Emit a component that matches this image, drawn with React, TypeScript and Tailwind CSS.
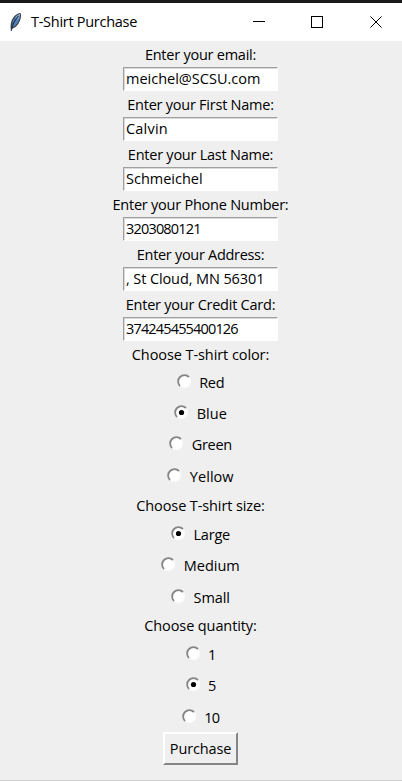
import React from "react";

function Feather() {
  return (
    <svg width="14" height="20" viewBox="0 0 14 20" className="ml-[9px] shrink-0">
      <path d="M2 18.6 C1 14 1.6 9 4.4 5.2 C6.4 2.6 9 1.2 11.6 1 C12.6 3.6 11.8 8 9.6 11.6 C8 14.2 6 16 3.6 16.4 Z" fill="#3f4248" />
      <path d="M3.4 14.6 C3 10.6 4.2 7.2 6.4 4.8 C8 3 9.6 2.2 11 2 C11.4 5 10.4 8.4 8.4 11.2 C7 13.2 5.4 14.6 3.4 14.6 Z" fill="#4f83bd" />
      <path d="M6.6 5.4 C8 3.4 9.4 2.4 10.8 2.2 C10.8 4 10 5.8 8.6 7.4 Z" fill="#9dbbdc" />
      <path d="M2.2 18.8 C3 13.6 5.4 8.4 9.6 3.8" fill="none" stroke="#22344d" strokeWidth="1.1" />
    </svg>
  );
}

function TitleBar() {
  return (
    <header className="flex h-[41px] items-center border-t-[3px] border-[#1c1a1c] bg-white">
      <Feather />
      <h1 className="ml-2 w-[200px] whitespace-nowrap text-[14.5px] font-normal tracking-[-0.28px] text-black">T-Shirt Purchase</h1>
      <svg width="130" height="14" viewBox="0 0 130 14" className="ml-auto mr-[19px] shrink-0" fill="none" stroke="#000">
        <path d="M0 6.5H12" />
        <rect x="58.5" y="1.5" width="11" height="11" />
        <path d="M117.5 1.5L128.5 12.5M128.5 1.5L117.5 12.5" />
      </svg>
    </header>
  );
}

function Label({ text, tracking = "tracking-[-0.24px]", height = "h-[25px]" }: { text: string; tracking?: string; height?: string }) {
  return <div className={`flex ${height} items-center justify-center whitespace-nowrap ${tracking}`}>{text}</div>;
}

function Entry({ text, tracking = "tracking-normal" }: { text: string; tracking?: string }) {
  return (
    <div className="mb-px flex h-6 w-[155px] items-center whitespace-nowrap border border-[#a0a0a0] border-b-white border-r-white bg-white pl-[2px] shadow-[inset_1px_1px_0_#d9d9d9]">
      <span className={tracking}>{text}</span>
    </div>
  );
}

function Radio({ text, checked = false, tracking = "tracking-[-0.3px]" }: { text: string; checked?: boolean; tracking?: string }) {
  return (
    <div className="flex h-[31.33px] items-center justify-center">
      <svg width="15" height="15" viewBox="0 0 15 15" className="-mt-[3px] mr-[7.5px] shrink-0" fill="none">
        <circle cx="7.5" cy="7.5" r="6" fill="#fff" stroke="#fafafa" strokeWidth="1.4" />
        <path d="M3 12A6.2 6.2 0 0 1 12 3" stroke="#858585" strokeWidth="1.8" />
        {checked && <circle cx="7.5" cy="7.5" r="2.6" fill="#000" />}
      </svg>
      <span className={tracking}>{text}</span>
    </div>
  );
}

export default function App() {
  return (
    <div className="flex h-[781px] w-[402px] flex-col overflow-hidden bg-[#efefef] font-['Open_Sans','Noto_Sans',sans-serif] text-[14.5px] leading-5 text-black">
      <TitleBar />
      <main className="flex w-[401px] flex-1 flex-col items-center pt-px">
        <Label text="Enter your email:" />
        <Entry text="meichel@SCSU.com" />
        <Label text="Enter your First Name:" />
        <Entry text="Calvin" tracking="tracking-[0.2px]" />
        <Label text="Enter your Last Name:" />
        <Entry text="Schmeichel" />
        <Label text="Enter your Phone Number:" />
        <Entry text="3203080121" tracking="tracking-[-0.82px]" />
        <Label text="Enter your Address:" tracking="tracking-[-0.3px]" />
        <Entry text=", St Cloud, MN 56301" tracking="tracking-[-0.1px]" />
        <Label text="Enter your Credit Card:" />
        <Entry text="374245455400126" tracking="tracking-[-0.84px]" />
        <Label text="Choose T-shirt color:" tracking="tracking-[-0.08px]" />
        <Radio text="Red" />
        <Radio text="Blue" checked tracking="tracking-normal" />
        <Radio text="Green" />
        <Radio text="Yellow" tracking="tracking-[0.05px]" />
        <Label text="Choose T-shirt size:" tracking="tracking-[-0.11px]" height="h-[27px]" />
        <Radio text="Large" checked tracking="tracking-[-0.2px]" />
        <Radio text="Medium" tracking="tracking-normal" />
        <Radio text="Small" tracking="tracking-[-0.1px]" />
        <Label text="Choose quantity:" tracking="tracking-[-0.1px]" height="h-[26px]" />
        <Radio text="1" tracking="tracking-[-0.8px]" />
        <Radio text="5" checked tracking="tracking-[-0.8px]" />
        <Radio text="10" tracking="tracking-[-0.8px]" />
        <button className="-mt-px flex h-[33px] w-[75px] items-center justify-center border-2 border-white border-b-[#858585] border-r-[#858585] tracking-[-0.15px]">Purchase</button>
      </main>
      <div className="h-px bg-[#cfcfcf]" />
    </div>
  );
}
